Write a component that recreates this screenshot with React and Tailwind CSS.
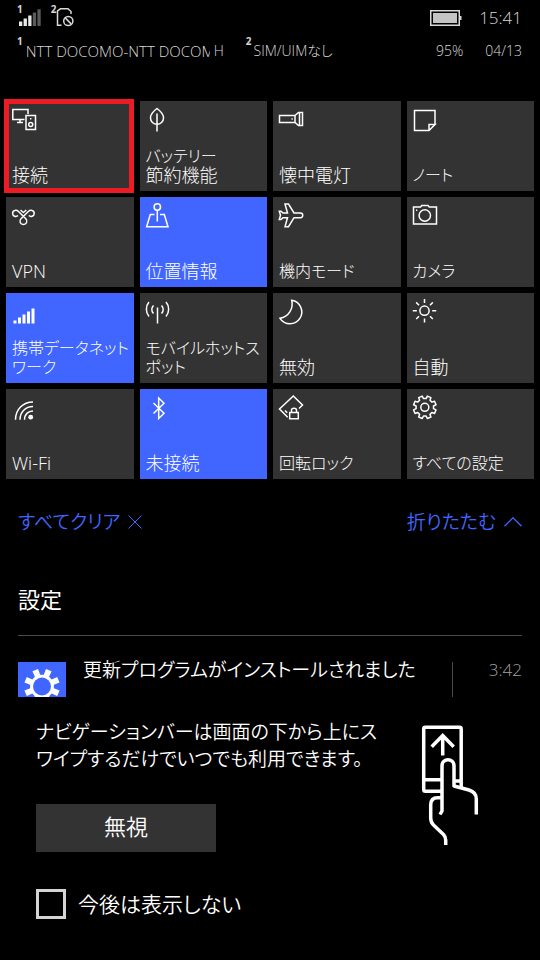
import { useState } from "react";
import clsx from "clsx";

// outline of an eight-toothed cog, teeth shifted off the axes
function cogPath(cx, cy, outer, inner) {
  const points = [];
  for (let i = 0; i < 8; i++) {
    const mid = ((i + 0.5) * Math.PI) / 4;
    [
      [inner, -0.24],
      [outer, -0.17],
      [outer, 0.17],
      [inner, 0.24],
    ].forEach(([r, offset]) => {
      const x = cx + r * Math.cos(mid + offset);
      const y = cy + r * Math.sin(mid + offset);
      points.push(`${x.toFixed(2)} ${y.toFixed(2)}`);
    });
  }
  return `M${points.join("L")}Z`;
}

const icons = {
  connect: (
    <>
      <path d="M14.5 14.5H2.8V4.5H18V9M10 14.5V17.5M7 17.5H13" />
      <rect x="16" y="10.5" width="9.5" height="14" />
      <circle cx="20.7" cy="19.5" r="2" />
      <path d="M20 13.8H21.4" />
    </>
  ),
  leaf: <path d="M13 3.5C9.5 6 6.5 9 6.5 13C6.5 16.5 9.5 19.3 13 19.3C16.5 19.3 19.5 16.5 19.5 13C19.5 9 16.5 6 13 3.5ZM13 8.5V26.5" />,
  flashlight: (
    <>
      <path d="M18 10.5H2.5V17.5H18ZM18 10.5L21.5 7.5H25.5V20.5H21.5L18 17.5M22.5 7.5V20.5" />
      <path d="M14.5 14H15.8" />
    </>
  ),
  note: <path d="M24 19.5V5.5H3.5V25.5H18L24 19.5H18V25.5" />,
  vpn: (
    <>
      <path d="M8 14.5C6.2 16.2 2.6 15.5 2.6 12.3C2.6 9 6.5 8.5 8.5 10.5L15.8 17.8C18 20 16.5 23.5 13.4 23.5C10.3 23.5 8.8 20 11 17.8L18.3 10.5C20.3 8.5 24.2 9 24.2 12.3C24.2 15.5 20.6 16.2 18.8 14.5" />
      <path d="M10.5 9L13.4 11.5L16.3 9" />
    </>
  ),
  location: (
    <>
      <circle cx="13.3" cy="6" r="3.2" />
      <path d="M13.3 9.2V20.5M10.5 13.5H6.3L2.6 25.7H24L20.3 13.5H16" />
    </>
  ),
  plane: <path d="M8 3H11.5L17 12H23.5C26.5 12 26.5 16.7 23.5 16.7H17L11.5 25.7H8L10.5 16.7H6L4 18.5H2.3L3.5 14.3L2.3 10.2H4L6 12H10.5Z" />,
  camera: (
    <>
      <path d="M2.5 6H9.5L10.8 4.5H17L18.3 6H25.5V23H2.5Z" />
      <circle cx="13.8" cy="14.5" r="5.7" />
      <path d="M5 9.2H6.3" />
    </>
  ),
  signal: (
    <path
      d="M3.5 23.5H6.5V26.5H3.5ZM8 20.5H11V26.5H8ZM12.5 17.5H15.5V26.5H12.5ZM17 14.5H20V26.5H17ZM21.5 11.5H24.5V26.5H21.5Z"
      fill="currentColor"
      stroke="none"
    />
  ),
  hotspot: <path d="M13.5 10.5V26.5M5 5C1.5 9 1.5 15.5 5 19.5M22 5C25.5 9 25.5 15.5 22 19.5M9.5 8.5C7.3 11 7.3 14 9.5 16.5M17.5 8.5C19.7 11 19.7 14 17.5 16.5" />,
  moon: <path d="M14.7 3.3A11.8 11.8 0 1 1 3 21.3A14.5 14.5 0 0 0 14.7 3.3Z" />,
  sun: (
    <>
      <circle cx="13.5" cy="13.7" r="4.6" />
      <path d="M13.5 2V6M13.5 21.4V25.4M1.8 13.7H5.8M21.2 13.7H25.2M5.2 5.4L8 8.2M19 19.2L21.8 22M5.2 22L8 19.2M19 8.2L21.8 5.4" />
    </>
  ),
  wifi: (
    <>
      <path d="M5.5 26.7C5.5 16.5 13 9 23 9M10 26.7C10 19 15.5 13.5 23 13.5M14.5 26.7C14.5 21.5 18 18 23 18" />
      <circle cx="20.7" cy="24.2" r="2.4" fill="currentColor" stroke="none" />
    </>
  ),
  bluetooth: <path d="M9.5 10L20 20.3L14.7 25.5V5L20 10.2L9.5 20.5" />,
  rotation: (
    <>
      <path d="M10.7 24.3L2.5 16L16.3 3L25.5 12L22 15.5M8 17.5L10.2 19.8" />
      <path d="M12.7 19.5H21.3V25.7H12.7ZM14.5 19.5V17C14.5 14.5 19.5 14.5 19.5 17V19.5" />
    </>
  ),
  gear: (
    <>
      <path d={cogPath(13.8, 14.3, 11.5, 8.8)} strokeLinejoin="round" />
      <circle cx="13.8" cy="14.3" r="4" />
    </>
  ),
};

const quickActions = [
  { id: "connect", icon: "connect", lines: ["接続"], highlighted: true },
  { id: "battery", icon: "leaf", lines: ["バッテリー", "節約機能"] },
  { id: "flashlight", icon: "flashlight", lines: ["懐中電灯"] },
  { id: "note", icon: "note", lines: ["ノート"] },
  { id: "vpn", icon: "vpn", lines: ["VPN"] },
  { id: "location", icon: "location", lines: ["位置情報"], on: true },
  { id: "airplane", icon: "plane", lines: ["機内モード"] },
  { id: "camera", icon: "camera", lines: ["カメラ"] },
  { id: "data", icon: "signal", lines: ["携帯データネット", "ワーク"], on: true },
  { id: "hotspot", icon: "hotspot", lines: ["モバイルホットス", "ポット"] },
  { id: "quiet", icon: "moon", lines: ["無効"] },
  { id: "brightness", icon: "sun", lines: ["自動"] },
  { id: "wifi", icon: "wifi", lines: ["Wi-Fi"] },
  { id: "bluetooth", icon: "bluetooth", lines: ["未接続"], on: true },
  { id: "rotation", icon: "rotation", lines: ["回転ロック"] },
  { id: "settings", icon: "gear", lines: ["すべての設定"] },
];

const hasKana = (text) => /[\u3041-\u30ff]/.test(text);

function StatusBar() {
  return (
    <header className="pt-1 pr-[18px] pl-[17px] text-[#d8d8d8]">
      <div className="flex h-7 items-start">
        <span className="text-[10px] leading-[10px] font-bold">1</span>
        <svg className="-ml-1 h-6 w-6" viewBox="0 0 24 24" fill="#e8e8e8" aria-hidden="true">
          <path d="M0 17.5H3.3V22H0ZM4.6 14.5H7.9V22H4.6ZM9.2 11.5H12.5V22H9.2Z" />
          <path d="M13.8 8.5H17.1V22H13.8ZM18.4 5.3H21.7V22H18.4Z" fill="#5a5a5a" />
        </svg>
        <span className="ml-2 text-[10px] leading-[10px] font-bold">2</span>
        <svg className="h-6 w-5" viewBox="0 0 20 24" fill="none" stroke="#d8d8d8" strokeWidth="1.5" aria-hidden="true">
          <path d="M5.500 21.3H1.5V7L4.5 4.800H12L15 7.5V10" />
          <circle cx="12.3" cy="17" r="4.6" />
          <path d="M9.2 13.9L15.4 20.1" />
        </svg>
        <svg className="mt-1 ml-auto h-5 w-8" viewBox="0 0 32 20" aria-hidden="true">
          <rect x="0.75" y="2.75" width="28.5" height="14.5" fill="none" stroke="#d8d8d8" strokeWidth="1.5" />
          <rect x="3" y="5" width="24" height="10" fill="#c4c4c4" />
          <rect x="30" y="8" width="1.5" height="4" fill="#d8d8d8" />
        </svg>
        <time className="ml-[17px] text-[17px] leading-[28px]">15:41</time>
      </div>
      <div className="mt-1 flex h-6 items-start text-sm leading-[30px]">
        <span className="text-[10px] leading-[10px] font-bold">1</span>
        <span className="ml-[3px] w-[184px] overflow-hidden text-[15px] leading-[30px] whitespace-nowrap">
          NTT DOCOMO-NTT DOCOM
        </span>
        <span className="ml-1">H</span>
        <span className="ml-[22px] text-[10px] leading-[10px] font-bold">2</span>
        <span className="ml-[2px]">SIM/UIMなし</span>
        <span className="ml-auto">95%</span>
        <span className="ml-[22px]">04/13</span>
      </div>
    </header>
  );
}

function QuickActionTile({ action, isOn, onToggle }) {
  return (
    <button
      type="button"
      aria-pressed={isOn}
      onClick={onToggle}
      className={clsx(
        "relative flex h-[90px] flex-col items-start justify-between pt-1 pb-[6px] pl-1 text-left",
        isOn ? "bg-[#4066ff]" : "bg-[#333333]"
      )}
    >
      <svg className="size-7" viewBox="0 0 28 28" fill="none" stroke="currentColor" strokeWidth="1.5" aria-hidden="true">
        {icons[action.icon]}
      </svg>
      <span className="flex flex-col pl-[2px] leading-[19px] whitespace-nowrap">
        {action.lines.map((line) => (
          <span key={line} className={hasKana(line) ? "text-[16px] leading-[19px]" : "text-[18px] leading-[19px]"}>
            {line}
          </span>
        ))}
      </span>
      {action.highlighted && (
        <span className="absolute -inset-y-[2px] right-0 -left-[2px] border-5 border-[#ed1c24]" />
      )}
    </button>
  );
}

function SwipeHint() {
  return (
    <svg
      className="mt-[5px] h-[123px] w-[60px] shrink-0"
      viewBox="0 0 60 123"
      fill="none"
      stroke="white"
      strokeWidth="3.5"
      strokeLinejoin="round"
      aria-hidden="true"
    >
      <path d="M22 67.3H5.5Q3.7 67.3 3.7 65.5V5Q3.7 3.3 5.5 3.3H39.5Q41.2 3.3 41.2 5V63M3.7 55.7H22M34 57H41" />
      <path d="M22.7 31.5V11.5M11.7 22.7L22.7 11.5L33.7 22.7" strokeLinejoin="miter" />
      <path d="M20 90.5L22 87V42C22 33.5 34 33.5 34 42V62L49 66C54 67.5 56.3 70 56.3 75V90.5" />
      <path d="M22 73.7H17.5C13 73.7 10.7 76.5 10.7 81V94C10.7 97.5 11.5 99 13.5 101L23.5 110.5C25.3 112.5 25.7 113.5 25.7 116V121" />
    </svg>
  );
}

export default function App() {
  const [enabled, setEnabled] = useState(() => quickActions.filter((item) => item.on).map((item) => item.id));
  const [dontShow, setDontShow] = useState(false);

  const handleToggle = (id) => {
    setEnabled((current) => (current.includes(id) ? current.filter((item) => item !== id) : [...current, id]));
  };

  return (
    <div className="min-h-screen bg-black pb-10 font-['Open_Sans','Noto_Sans_CJK_JP',sans-serif] font-light text-white [font-feature-settings:'palt']">
      <StatusBar />

      <section className="mt-[41px] grid grid-cols-4 gap-[6px] px-[6px]">
        {quickActions.map((action) => (
          <QuickActionTile
            key={action.id}
            action={action}
            isOn={enabled.includes(action.id)}
            onToggle={() => handleToggle(action.id)}
          />
        ))}
      </section>

      <div className="mt-[27px] flex justify-between px-[18px] text-[19px] leading-8 font-[350] text-[#4066ff]">
        <button type="button" className="flex items-center gap-2">
          すべてクリア
          <svg className="size-[14px]" viewBox="0 0 14 14" fill="none" stroke="currentColor" aria-hidden="true">
            <path d="M0.5 0.5L13.5 13.5M13.5 0.5L0.5 13.5" />
          </svg>
        </button>
        <button type="button" className="flex items-center gap-2">
          折りたたむ
          <svg className="h-[10px] w-[18px]" viewBox="0 0 18 10" fill="none" stroke="currentColor" strokeWidth="1.3" aria-hidden="true">
            <path d="M0.5 9.3L9 0.8L17.5 9.3" />
          </svg>
        </button>
      </div>

      <main className="mt-[45px] px-[18px] font-[350]">
        <h2 className="text-[22px] leading-8 font-normal">設定</h2>

        <div className="mt-5 flex items-start border-t border-[#4a4a4a] pt-[26px]">
          <svg className="h-[35px] w-12 shrink-0 bg-[#4066ff]" viewBox="0 0 48 35" aria-hidden="true">
            <path d={cogPath(24, 24.5, 18, 12)} fill="white" />
            <circle cx="24" cy="24.5" r="9" fill="#4066ff" />
          </svg>
          <h3 className="-mt-2 ml-[17px] text-[19px] leading-8 whitespace-nowrap">更新プログラムがインストールされました</h3>
          <div className="ml-auto h-[35px] w-px bg-[#4a4a4a]" />
          <time className="-mt-2 w-[69px] text-right text-[17px] leading-8 font-light text-[#a0a0a0]">3:42</time>
        </div>

        <div className="mt-[22px] flex justify-between pr-[42px] pl-[18px]">
          <p className="text-[19px] leading-[27px] whitespace-nowrap">
            ナビゲーションバーは画面の下から上にス
            <br />
            ワイプするだけでいつでも利用できます。
          </p>
          <SwipeHint />
        </div>

        <div className="-mt-[43px] pl-[18px]">
          <button type="button" className="h-12 w-[180px] bg-[#333333] pb-1 text-[22px]">
            無視
          </button>
          <label className="mt-9 flex items-center gap-3 text-[21px] leading-8">
            <input
              type="checkbox"
              checked={dontShow}
              onChange={(event) => setDontShow(event.target.checked)}
              className="size-[30px] appearance-none border-3 border-[#d4d4d4] checked:bg-[#4066ff]"
            />
            今後は表示しない
          </label>
        </div>
      </main>
    </div>
  );
}
